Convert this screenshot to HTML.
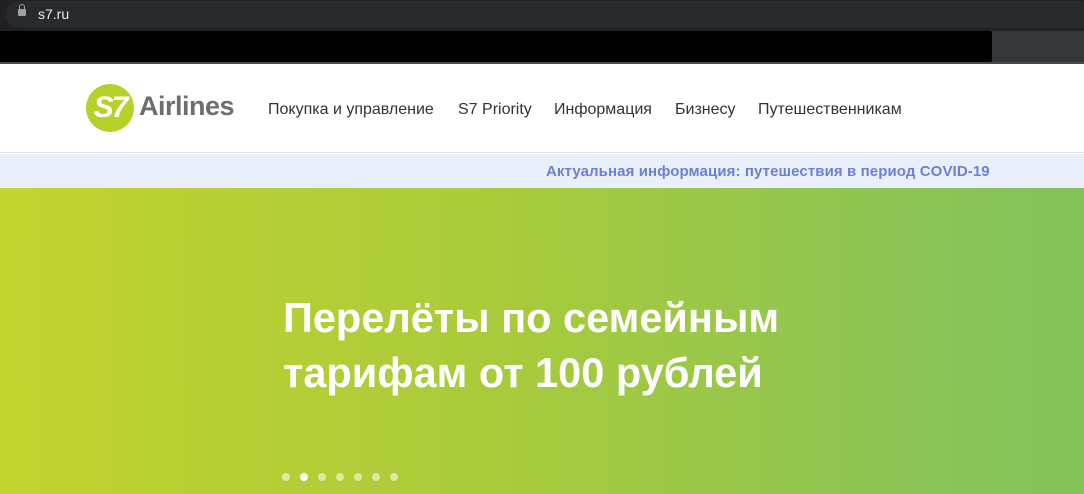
<!DOCTYPE html>
<html><head><meta charset="utf-8"><style>
*{margin:0;padding:0;box-sizing:border-box}
body{width:1084px;height:494px;overflow:hidden;font-family:"Liberation Sans",sans-serif;background:#fff;position:relative}
.top{position:absolute;left:0;top:0;width:1084px;height:31px;background:#202124}
.pill{position:absolute;left:6px;top:1px;width:1090px;height:27px;background:#292a2d;border-radius:14px}
.url{position:absolute;left:38px;top:6px;color:#e8eaed;font-size:14px}
.lock{position:absolute;left:18px;top:9px;width:8px;height:7px;background:#9aa0a6;border-radius:1px}
.lock:before{content:"";position:absolute;left:1px;top:-5px;width:6px;height:7px;border:1.5px solid #9aa0a6;border-radius:4px 4px 0 0;box-sizing:border-box}
.bar2{position:absolute;left:0;top:31px;width:1084px;height:33px;background:#35363a;border-bottom:2px solid #4a4b4f}
.blk{position:absolute;left:0;top:31px;width:992px;height:31px;background:#000;border-radius:0 2px 2px 0}
.hdr{position:absolute;left:0;top:64px;width:1084px;height:89px;background:#fff;border-bottom:1px solid #e2e2e2}
.logo{position:absolute;left:86px;top:84px;width:48px;height:48px;border-radius:50%;background:#b8d12a;color:#fff;font-weight:bold;font-style:italic;font-size:30px;line-height:48px;text-align:center;letter-spacing:-2px}
.air{position:absolute;left:139px;top:91px;font-size:27px;font-weight:bold;color:#6d6e71;letter-spacing:-0.5px}
.nav{position:absolute;top:101px;font-size:16px;color:#333}
.note{position:absolute;left:0;top:154px;width:1084px;height:34px;background:#eaf0fb}
.note span{position:absolute;left:546px;top:9px;font-size:15px;font-weight:bold;color:#6b80d6;letter-spacing:0.1px}
.hero{position:absolute;left:0;top:188px;width:1084px;height:306px;background:linear-gradient(90deg,#c3d42f 0%,#a9cb3a 45%,#8cc456 85%,#84c25c 100%)}
.h1{position:absolute;left:283px;top:290px;color:#fff;font-size:41.5px;font-weight:bold;line-height:55px}
.dot{position:absolute;top:473px;width:8px;height:8px;border-radius:50%;background:rgba(255,255,255,.55)}
</style></head><body>
<div class="top"><div class="pill"></div><div class="lock"></div><div class="url">s7.ru</div></div>
<div class="bar2"></div><div class="blk"></div>
<div class="hdr"></div>
<div class="logo">S7</div><div class="air">Airlines</div>
<div class="nav" style="left:268px">Покупка и управление</div>
<div class="nav" style="left:458px">S7 Priority</div>
<div class="nav" style="left:554px">Информация</div>
<div class="nav" style="left:675px">Бизнесу</div>
<div class="nav" style="left:758px">Путешественникам</div>
<div class="note"><span>Актуальная информация: путешествия в период COVID-19</span></div>
<div class="hero"></div>
<div class="h1">Перелёты по семейным<br>тарифам от 100 рублей</div>
<div class="dot" style="left:282px"></div>
<div class="dot" style="left:300px;background:#fff"></div>
<div class="dot" style="left:318px"></div>
<div class="dot" style="left:336px"></div>
<div class="dot" style="left:354px"></div>
<div class="dot" style="left:372px"></div>
<div class="dot" style="left:390px"></div>
</body></html>
